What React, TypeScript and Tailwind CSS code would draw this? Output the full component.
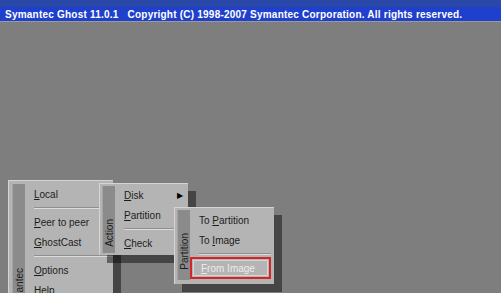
const font = { fontFamily: '"Liberation Sans", Arial, sans-serif' };

function Item({ label, hot, rest, pre = "" }: { label?: string; hot: string; rest: string; pre?: string }) {
  return (
    <div className="flex h-[20px] items-center text-[10px] text-[#1c1c1c]">
      <span>
        {pre}
        <span className="underline underline-offset-1">{hot}</span>
        {rest}
      </span>
      {label}
    </div>
  );
}

function Sep({ h = "h-[8px]" }: { h?: string }) {
  return (
    <div className={`flex ${h} items-center`}>
      <div className="h-[2px] w-full border-t border-[#8f8f8f] border-b border-b-[#dcdcdc]" />
    </div>
  );
}

function Strip({ text, pb }: { text: string; pb: string }) {
  return (
    <div className={`flex w-[13px] shrink-0 flex-col justify-end border-l border-[#a4a4a4] bg-[#8b8b8b] ${pb}`}>
      <span className="rotate-180 text-[10px] leading-[13px] text-[#1c1c1c] [writing-mode:vertical-rl]">{text}</span>
    </div>
  );
}

export default function App() {
  return (
    <div className="relative h-[293px] w-[501px] overflow-hidden bg-[#7e7e7e]" style={font}>
      <div className="h-[7px] bg-[#2a48a8]" />
      <div className="flex h-[14px] items-center bg-[#1f40cc] pl-[5px] text-[10px] font-bold tracking-[0.22px] text-white whitespace-pre">
        {"Symantec Ghost 11.0.1   Copyright (C) 1998-2007 Symantec Corporation. All rights reserved."}
      </div>
      <div className="h-px bg-[#9a9a9a]" />

      {/* main menu */}
      <div className="absolute left-[8px] top-[180px] flex h-[142px] w-[105px] border-t border-l border-[#d4d4d4] bg-[#b4b4b4] pt-[3px] pl-[3px] shadow-[8px_8px_0_rgba(0,0,0,0.45)]">
        <Strip text="Symantec" pb="pb-[10px]" />
        <div className="flex flex-1 flex-col pl-[9px]">
          <Item hot="L" rest="ocal" />
          <Sep />
          <Item hot="P" rest="eer to peer" />
          <Item hot="G" rest="hostCast" />
          <Sep />
          <Item hot="O" rest="ptions" />
          <Item hot="H" rest="elp" />
        </div>
      </div>

      {/* action menu */}
      <div className="absolute left-[99px] top-[183px] flex h-[72px] w-[89px] border-t border-l border-[#d4d4d4] bg-[#b4b4b4] py-[2px] pl-[2px] shadow-[8px_8px_0_rgba(0,0,0,0.45)]">
        <Strip text="Action" pb="pb-[6px]" />
        <div className="flex flex-1 flex-col pl-[9px] pr-[5px]">
          <div className="flex h-[20px] items-center justify-between text-[10px] text-[#1c1c1c]">
            <span>
              <span className="underline underline-offset-1">D</span>isk
            </span>
            <span className="text-[8px] text-black">▶</span>
          </div>
          <Item hot="P" rest="artition" />
          <Sep />
          <Item hot="C" rest="heck" />
        </div>
      </div>

      {/* partition menu */}
      <div className="absolute left-[174px] top-[207px] flex h-[77px] w-[100px] border-t border-l border-[#d4d4d4] bg-[#b4b4b4] pt-[2px] pb-[4px] pl-[2px] shadow-[8px_8px_0_rgba(0,0,0,0.45)]">
        <Strip text="Partition" pb="pb-[10px]" />
        <div className="flex flex-1 flex-col pr-[3px]">
          <div className="pl-[9px]">
            <Item pre="To " hot="P" rest="artition" />
            <Item pre="To " hot="I" rest="mage" />
          </div>
          <div className="pl-[9px]">
            <Sep h="h-[7px]" />
          </div>
          <div className="flex h-[22px] items-center border-2 border-[#d42626] p-px">
            <div className="flex h-full w-full items-center border border-[#d6d6d6] pl-[7px] text-[10px] text-[#ececec]">
              <span>
                <span className="underline underline-offset-1">F</span>rom Image
              </span>
            </div>
          </div>
        </div>
      </div>
    </div>
  );
}
